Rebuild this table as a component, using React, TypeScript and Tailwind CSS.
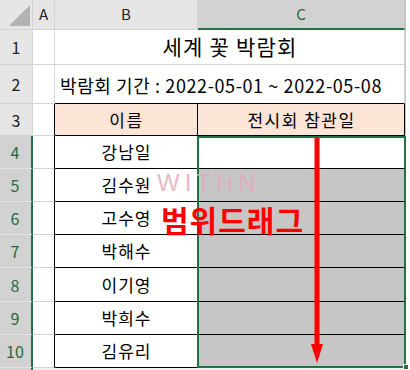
import React from "react";

const font = { fontFamily: '"Noto Sans CJK KR", "Noto Sans", sans-serif' };

const names = ["강남일", "김수원", "고수영", "박해수", "이기영", "박희수", "김유리"];

function RowHead({ n, selected }: { n: number; selected?: boolean }) {
  return selected ? (
    <div className="flex items-center justify-center border-b border-[#e2e2e2] border-r-2 border-r-[#217346] bg-[#d2d2d2] pr-px text-[16px] text-[#1d6b41]">
      {n}
    </div>
  ) : (
    <div className="flex items-center justify-center border-b border-r border-[#d4d4d4] bg-[#e6e6e6] text-[16px] text-[#222]">
      {n}
    </div>
  );
}

export default function App() {
  return (
    <div className="relative h-[370px] w-[410px] overflow-hidden bg-white" style={font}>
      <div className="grid h-full w-full grid-cols-[33px_22px_143px_207px_5px] grid-rows-[30px_35px_39px_32px_33px_33px_33px_33px_34px_33px_33px_2px]">
        {/* column headers */}
        <div className="relative border-b border-r border-[#d4d4d4] bg-[#e6e6e6]">
          <svg className="absolute left-[9px] top-[5px]" width="22" height="22" viewBox="0 0 22 22">
            <polygon points="0,21 21,21 21,0" fill="#b3b3b3" />
          </svg>
        </div>
        <div className="flex items-center justify-center border-b border-r border-[#d4d4d4] bg-[#e6e6e6] text-[15px] text-[#222]">A</div>
        <div className="flex items-center justify-center border-b border-r border-[#d4d4d4] bg-[#e6e6e6] text-[15px] text-[#222]">B</div>
        <div className="flex items-center justify-center border-b-2 border-r border-b-[#217346] border-r-[#c4c4c4] bg-[#d2d2d2] pt-px text-[15px] text-[#1d6b41]">C</div>
        <div className="row-span-12 border-l border-[#c8c8c8] bg-white" />

        {/* row 1 : title */}
        <RowHead n={1} />
        <div className="border-b border-r border-[#d4d4d4]" />
        <div className="col-span-2 flex items-center justify-center border-b border-r border-[#d4d4d4] pb-px pl-px text-[21px] tracking-[1.2px] text-black">
          세계 꽃 박람회
        </div>

        {/* row 2 : period */}
        <RowHead n={2} />
        <div className="border-b border-r border-[#d4d4d4]" />
        <div className="col-span-2 flex items-center border-b border-r border-b-black border-r-[#d4d4d4] pl-[5px] pt-[3px] text-[18px] tracking-[0.6px] text-black">
          박람회 기간 : 2022-05-01 ~ 2022-05-08
        </div>

        {/* row 3 : table header */}
        <RowHead n={3} />
        <div className="border-b border-r border-b-[#d4d4d4] border-r-black" />
        <div className="flex items-center justify-center border-b border-r border-black bg-[#fce4d6] pl-px text-[17px] tracking-[1.5px] text-black">이름</div>
        <div className="flex items-center justify-center border-b border-r border-black bg-[#fce4d6] pl-px text-[17px] tracking-[1.5px] text-black">전시회 참관일</div>

        {/* rows 4-10 : names */}
        {names.map((name, i) => (
          <React.Fragment key={name}>
            <RowHead n={i + 4} selected />
            <div className="border-b border-r border-b-[#d4d4d4] border-r-black" />
            <div className="flex items-center justify-center border-b border-r border-black pl-px text-[17px] tracking-[1px] text-black">{name}</div>
            <div className={`border-b border-r border-black ${i === 0 ? "bg-white" : "bg-[#c6c6c6]"}`} />
          </React.Fragment>
        ))}

        {/* bottom strip */}
        <div className="border-r-2 border-[#217346] bg-[#d2d2d2]" />
        <div className="col-span-3 bg-[#f0f0f0]" />
      </div>

      {/* selection frame and fill handle */}
      <div className="pointer-events-none absolute left-[197px] top-[136px] h-[232px] w-[209px] border-2 border-[#217346]" />
      <div className="absolute left-[403px] top-[364px] h-[6px] w-[6px] border border-white bg-[#217346]" />

      {/* watermark */}
      <div className="absolute left-[157px] top-[171px] text-[24px] font-light leading-none tracking-[5px] text-[#e3a9bb] opacity-80" style={{ fontFamily: '"Liberation Sans", sans-serif' }}>
        WITHN
      </div>

      {/* caption */}
      <div className="absolute left-[161px] top-[204px] text-[30px] font-bold leading-none tracking-[1px] text-[#ff0000]">
        범위드래그
      </div>

      {/* drag arrow */}
      <svg className="absolute left-[310px] top-[138px]" width="14" height="226" viewBox="0 0 14 226">
        <rect x="4.5" y="0" width="5" height="208" fill="#ff0000" />
        <polygon points="1,206 13,206 7,225" fill="#ff0000" />
      </svg>
    </div>
  );
}
